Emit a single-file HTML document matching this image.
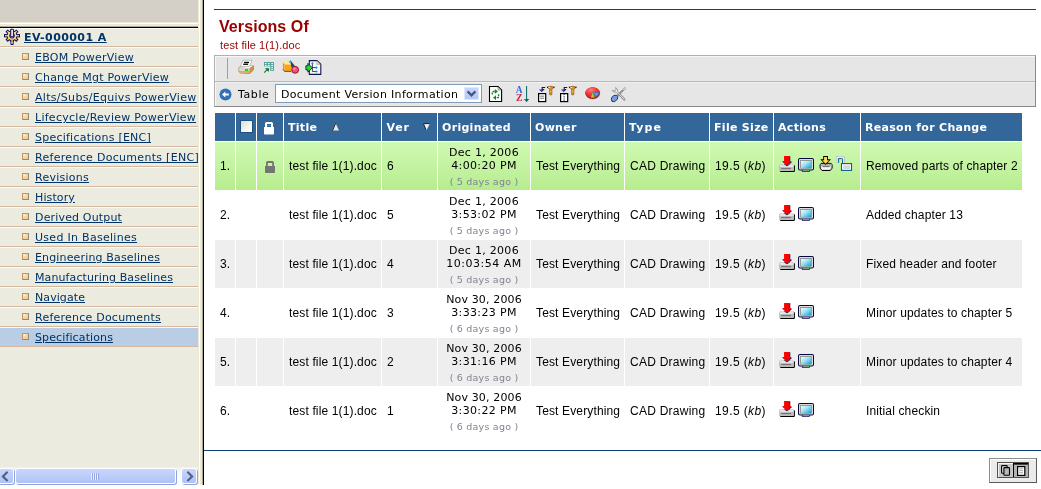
<!DOCTYPE html>
<html>
<head>
<meta charset="utf-8">
<title>Versions Of</title>
<style>
html,body{margin:0;padding:0;}
#grid,#side,#tb,#h1,#h2{will-change:transform;}
body{width:1041px;height:489px;overflow:hidden;background:#fff;position:relative;font-family:"Liberation Sans",sans-serif;font-size:12px;color:#000;}
.abs{position:absolute;}
/* ---------- sidebar ---------- */
#side{position:absolute;left:0;top:0;width:198px;height:485px;background:#ecebdf;overflow:hidden;}
#sidetop{position:absolute;left:0;top:0;width:198px;height:22px;background:#d4d0c8;}
#sidetop2{position:absolute;left:0;top:22px;width:198px;height:5px;background:#ece9d8;border-bottom:1px solid #aca899;box-sizing:border-box;}
#sidetop3{position:absolute;left:0;top:23px;width:198px;height:1px;background:#fff;}
#sideblack{position:absolute;left:0;top:27px;width:198px;height:1px;background:#000;}
#menu{position:absolute;left:0;top:28px;width:198px;}
.mi{position:relative;height:18px;border-bottom:1px solid #d4b8a0;border-top:1px solid #fbfaf6;white-space:nowrap;font-family:"DejaVu Sans","Liberation Sans",sans-serif;font-size:11px;line-height:18px;color:#003366;}
.mi.first{height:17px;line-height:17px;}
.mi.sel{background:#b9cde5;}
.mi a{position:absolute;left:35px;top:1px;color:#003366;text-decoration:underline;}
.mi.first a{left:24px;top:0;font-weight:bold;line-height:18px;}
.bul{position:absolute;left:22px;top:5px;width:5px;height:5px;border:1px solid #c29466;border-right-color:#8f8b74;border-bottom-color:#8f8b74;background:linear-gradient(135deg,#ffecc8,#f6d4a0 50%,#f0c890);}
.bul:after{content:"";position:absolute;left:1px;top:1px;width:1px;height:1px;background:#fff;}
/* frame border */
#fb1{position:absolute;left:198px;top:0;width:1px;height:485px;background:#ece9d8;}
#fb2{position:absolute;left:199px;top:0;width:1px;height:485px;background:#fff;}
#fb3{position:absolute;left:200px;top:0;width:3px;height:485px;background:#ece9d8;border-right:1px solid #aca899;box-sizing:border-box;}
#fb4{position:absolute;left:203px;top:0;width:1px;height:485px;background:#000;}
/* ---------- main ---------- */
#topline{position:absolute;left:214px;top:9px;width:822px;height:1px;background:#0f3f75;}
#h1{position:absolute;left:219px;top:18px;letter-spacing:0.08px;font-size:16px;line-height:18px;font-weight:bold;color:#990000;white-space:nowrap;}
#h2{position:absolute;left:220px;top:38px;letter-spacing:0.12px;font-size:11px;line-height:14px;color:#990000;white-space:nowrap;}
#tb{position:absolute;left:214px;top:55px;width:820px;height:50px;border:1px solid #b0b0b0;border-right-color:#8a8a8a;border-bottom-color:#8a8a8a;background:#e6e6e6;}
#tbsep{position:absolute;left:0;top:25px;width:820px;height:1px;background:#b8b8b8;}
#botline{position:absolute;left:204px;top:450px;width:837px;height:1px;background:#0f3f75;}

#tb{box-shadow:inset 1px 1px 0 #f8f8f8;}
#tbsep2{position:absolute;left:0;top:26px;width:820px;height:1px;background:#f0f0f0;}
#tbv{position:absolute;left:12px;top:2px;width:1px;height:21px;background:#8c9fc4;}
.ic{position:absolute;display:block;overflow:visible;}
#tbl-label{position:absolute;left:23px;top:32px;letter-spacing:0.6px;font-family:"DejaVu Sans","Liberation Sans",sans-serif;font-size:11px;line-height:14px;white-space:nowrap;color:#000;}
#sel{position:absolute;left:60px;top:28px;width:205px;height:17px;border:1px solid #7f9db9;background:#fff;}
#sel span{position:absolute;left:5px;top:3px;letter-spacing:0.33px;font-family:"DejaVu Sans","Liberation Sans",sans-serif;font-size:11px;line-height:14px;white-space:nowrap;color:#000;}
#selbtn{position:absolute;left:188px;top:2px;width:15px;height:13px;border-radius:2px;background:linear-gradient(#c9d7fd,#b4c6f6);box-shadow:0 0 0 1px #dfe7fe inset;}

#grid{position:absolute;left:214px;top:112px;border-collapse:separate;border-spacing:1px;table-layout:fixed;width:809px;}
#grid th{letter-spacing:0.3px;background:#336699;color:#fff;height:28px;padding:0 0 0 4px;text-align:left;font-family:"DejaVu Sans","Liberation Sans",sans-serif;font-weight:bold;font-size:11px;white-space:nowrap;position:relative;overflow:hidden;}
#grid td{letter-spacing:0.14px;height:48px;padding:0 0 0 5px;font-family:"Liberation Sans",sans-serif;font-size:12px;white-space:nowrap;position:relative;overflow:hidden;vertical-align:middle;}
#grid tr.g td{background:linear-gradient(#d0f9b1,#c4f3a2 50%,#b6ec8e);}
#grid tr.e td{background:#eeeeee;}
#grid tr.o td{background:#ffffff;}
#grid td.dt{letter-spacing:0.28px;padding:0;text-align:center;font-family:"DejaVu Sans","Liberation Sans",sans-serif;font-size:11px;line-height:13px;}
#grid td.dt i{display:block;font-style:normal;font-size:9.5px;letter-spacing:0.22px;color:#838294;line-height:12px;margin-top:4px;}
#grid th span.t{position:relative;top:0px;}
#grid td.dt .dd{position:relative;top:1px;}
#grid td.ty{letter-spacing:0.25px;}
#grid td.sz{letter-spacing:0.4px;}
#grid td.dt b{font-weight:normal;letter-spacing:0.34px;}


#sb{position:absolute;left:0;top:467px;width:198px;height:18px;background:linear-gradient(#f0efe8,#fbfbf8 40%,#fdfdfb);}
.sbb{position:absolute;top:1px;height:14px;border:1px solid #fff;border-radius:3px;background:linear-gradient(#c8d6fd,#bccdfa 50%,#aec2f6);box-shadow:1px 1px 0 #8ea4dc;}

#pg{position:absolute;left:989px;top:458px;width:46px;height:23px;border:1px solid #8c8c8c;border-right-color:#5a5a5a;border-bottom-color:#5a5a5a;background:#ebebeb;box-shadow:inset 1px 1px 0 #fff;}
#pgi{position:absolute;left:7px;top:3px;width:30px;height:14px;border:1px solid #505050;background:#c8c8c8;}
#pgl{position:absolute;left:0;top:0;width:15px;height:14px;background:#c6c6c6;box-shadow:inset 1px 1px 0 #f4f4f4;}
#pgr{position:absolute;left:15px;top:0;width:15px;height:14px;background:#b2b2b2;box-shadow:inset 1px 1px 0 #000, inset 0 2px 0 #444;}
.vd{font-family:"DejaVu Sans","Liberation Sans",sans-serif;}
</style>
</head>
<body>
<div id="side">
 <div id="sidetop"></div><div id="sidetop2"></div><div id="sidetop3"></div><div id="sideblack"></div>
 <div id="menu">
  <div class="mi first"><svg class="ic" style="left:3px;top:-1px" width="18" height="18" viewBox="0 0 18 18"><line x1="12.20" y1="7.70" x2="17.00" y2="7.70" stroke="#10104c" stroke-width="3.30" stroke-linecap="butt"/><line x1="5.80" y1="7.70" x2="1.00" y2="7.70" stroke="#10104c" stroke-width="3.30" stroke-linecap="butt"/><line x1="11.34" y1="9.88" x2="14.41" y2="12.75" stroke="#10104c" stroke-width="3.30" stroke-linecap="butt"/><line x1="6.66" y1="9.88" x2="3.59" y2="12.75" stroke="#10104c" stroke-width="3.30" stroke-linecap="butt"/><line x1="11.34" y1="5.52" x2="14.41" y2="2.65" stroke="#10104c" stroke-width="3.30" stroke-linecap="butt"/><line x1="6.66" y1="5.52" x2="3.59" y2="2.65" stroke="#10104c" stroke-width="3.30" stroke-linecap="butt"/><line x1="9.00" y1="10.90" x2="9.00" y2="13.70" stroke="#10104c" stroke-width="3.30" stroke-linecap="butt"/><circle cx="9" cy="7.7" r="3.6" fill="none" stroke="#10104c" stroke-width="3.6"/><line x1="12.20" y1="7.70" x2="16.00" y2="7.70" stroke="#ffc41c" stroke-width="1.40" stroke-linecap="butt"/><line x1="5.80" y1="7.70" x2="2.00" y2="7.70" stroke="#ffc41c" stroke-width="1.40" stroke-linecap="butt"/><line x1="11.34" y1="9.88" x2="13.68" y2="12.06" stroke="#ffc41c" stroke-width="1.40" stroke-linecap="butt"/><line x1="6.66" y1="9.88" x2="4.32" y2="12.06" stroke="#ffc41c" stroke-width="1.40" stroke-linecap="butt"/><line x1="11.34" y1="5.52" x2="13.68" y2="3.34" stroke="#ffd4a8" stroke-width="1.40" stroke-linecap="butt"/><line x1="6.66" y1="5.52" x2="4.32" y2="3.34" stroke="#ffd4a8" stroke-width="1.40" stroke-linecap="butt"/><line x1="9.00" y1="10.90" x2="9.00" y2="12.70" stroke="#ffc41c" stroke-width="1.40" stroke-linecap="butt"/><circle cx="9" cy="7.7" r="3.6" fill="none" stroke="#ffd4a8" stroke-width="1.7"/><circle cx="9" cy="7.7" r="1.9" fill="#ecebdf"/><rect x="7.2" y="0.8" width="3.7" height="8.6" rx="1" fill="#10104c"/><rect x="8.2" y="1.8" width="1.7" height="6.4" fill="#c4d4f8"/><rect x="8.8" y="1.8" width="0.8" height="6.4" fill="#fff"/><rect x="7.4" y="11.8" width="3.3" height="5.2" rx="0.9" fill="#10104c"/><rect x="8.3" y="13.2" width="1.5" height="2.6" fill="#e4ecfc"/><rect x="8.3" y="11.2" width="1.5" height="1.9" fill="#ffc41c"/></svg><a style="letter-spacing:0.420px">EV-000001 A</a></div>
  <div class="mi"><span class="bul"></span><a style="letter-spacing:0.260px">EBOM PowerView</a></div>
  <div class="mi"><span class="bul"></span><a style="letter-spacing:0.240px">Change Mgt PowerView</a></div>
  <div class="mi"><span class="bul"></span><a style="letter-spacing:0.300px">Alts/Subs/Equivs PowerView</a></div>
  <div class="mi"><span class="bul"></span><a style="letter-spacing:0.270px">Lifecycle/Review PowerView</a></div>
  <div class="mi"><span class="bul"></span><a style="letter-spacing:0.235px">Specifications [ENC]</a></div>
  <div class="mi"><span class="bul"></span><a style="letter-spacing:0.300px">Reference Documents [ENC]</a></div>
  <div class="mi"><span class="bul"></span><a style="letter-spacing:0.260px">Revisions</a></div>
  <div class="mi"><span class="bul"></span><a style="letter-spacing:0.120px">History</a></div>
  <div class="mi"><span class="bul"></span><a style="letter-spacing:0.160px">Derived Output</a></div>
  <div class="mi"><span class="bul"></span><a style="letter-spacing:0.290px">Used In Baselines</a></div>
  <div class="mi"><span class="bul"></span><a style="letter-spacing:0.150px">Engineering Baselines</a></div>
  <div class="mi"><span class="bul"></span><a style="letter-spacing:0.107px">Manufacturing Baselines</a></div>
  <div class="mi"><span class="bul"></span><a style="letter-spacing:0.080px">Navigate</a></div>
  <div class="mi"><span class="bul"></span><a style="letter-spacing:0.230px">Reference Documents</a></div>
  <div class="mi sel"><span class="bul"></span><a style="letter-spacing:0.120px">Specifications</a></div>
 </div>
<div id="sb">
<div class="sbb" style="left:-2px;width:14px;"><svg class="ic" style="left:1.5px;top:2px" width="8" height="11" viewBox="0 0 8 11"><path d="M6.6 0.8L1.9 5.4L6.6 10" fill="none" stroke="#4d6185" stroke-width="2.1"/></svg></div>
<div class="sbb" style="left:15px;width:159px;"><div style="position:absolute;left:75px;top:4px;width:8px;height:7px;background:repeating-linear-gradient(90deg,#eef3fe 0,#eef3fe 1px,#8ea4e0 1px,#8ea4e0 2px);opacity:0.9"></div></div>
<div class="sbb" style="left:181px;width:14px;"><svg class="ic" style="left:4px;top:2px" width="8" height="11" viewBox="0 0 8 11"><path d="M1.4 0.8L6.1 5.4L1.4 10" fill="none" stroke="#4d6185" stroke-width="2.1"/></svg></div>
</div>
</div>
<div id="fb1"></div><div id="fb2"></div><div id="fb3"></div><div id="fb4"></div>

<div id="topline"></div>
<div id="h1">Versions Of</div>
<div id="h2">test file 1(1).doc</div>
<div id="tb"><div id="tbsep"></div><div id="tbsep2"></div><div id="tbv"></div>
<!-- printer -->
<svg class="ic" style="left:23px;top:4px" width="17" height="15" viewBox="0 0 17 15">
 <polygon points="0.5,7.6 2.3,6.0 14.5,5.3 16,5.5 16,9.8 11.7,13.9 2.3,13.6 0.5,11.5" fill="#c68a4a"/>
 <polygon points="1,7.6 2.6,6.3 15.2,5.6 11.7,7.9" fill="#ffffd8"/>
 <rect x="1.2" y="8.1" width="10.4" height="3.1" fill="#dcdcdc"/>
 <polygon points="1.2,11.3 11.7,11.3 11.7,13.2 2.6,13" fill="#e0b070"/>
 <polygon points="11.9,8 15.6,5.9 15.6,9.6 11.9,13.2" fill="#c8904c"/>
 <polygon points="5,0.2 14,0.2 11.5,6.4 2.4,6.4" fill="#fff" stroke="#9a9a9a" stroke-width="0.6"/>
 <rect x="6.1" y="1.8" width="4.9" height="1.3" fill="#000"/>
 <rect x="5.2" y="3.6" width="4.9" height="1.3" fill="#000"/>
 <rect x="6.9" y="9" width="3.3" height="2" fill="#10e010"/>
</svg>
<!-- export -->
<svg class="ic" style="left:48px;top:6px" width="13" height="13" viewBox="0 0 13 13">
 <rect x="1" y="0" width="10" height="4.4" fill="#57a5a3"/>
 <rect x="7.2" y="0" width="3.8" height="9" fill="#57a5a3"/>
 <g fill="#f0f6f4"><rect x="2" y="1" width="1.6" height="1.1"/><rect x="5" y="1" width="1.6" height="1.1"/><rect x="8.3" y="1" width="1.7" height="1.1"/>
 <rect x="2" y="3" width="1.6" height="1.1"/><rect x="5" y="3" width="1.6" height="1.1"/><rect x="8.3" y="3" width="1.7" height="1.1"/>
 <rect x="8.3" y="5" width="1.7" height="1.1"/><rect x="8.3" y="7" width="1.7" height="1.1"/></g>
 <polygon points="1.9,6.2 6.2,6.2 5.6,10" fill="#0a7a2c"/>
 <line x1="1.2" y1="10.6" x2="4.6" y2="7.2" stroke="#0a7a2c" stroke-width="1.1"/>
</svg>
<!-- shapes -->
<svg class="ic" style="left:67px;top:4px" width="18" height="16" viewBox="0 0 18 16">
 <polygon points="8.3,0 6.5,2.3 9,4.8 9,7.8" fill="#3cb4f4"/>
 <polygon points="8.3,0 12.9,6 9.3,7.8 9,4.6" fill="#104a7c"/>
 <polygon points="0.9,2.2 7,2.2 9,4.6 2.5,4.6" fill="#fff060"/>
 <polygon points="0.9,2.2 2.5,4.6 2.5,11 0.9,9.1" fill="#ff9208"/>
 <rect x="2.5" y="4.6" width="6.5" height="6.4" fill="#ffa210"/>
 <polyline points="0.9,9.3 2.5,11.4 9,11.4" fill="none" stroke="#105080" stroke-width="0.9"/>
 <circle cx="13.1" cy="9.8" r="3.5" fill="#e85472" stroke="#8c1020" stroke-width="0.9"/>
 <circle cx="12.4" cy="8.8" r="1.2" fill="#f898b0"/>
</svg>
<!-- doc arrow -->
<svg class="ic" style="left:90px;top:4px" width="17" height="16" viewBox="0 0 17 16">
 <polygon points="4.3,0.6 12,0.6 15.8,4.3 15.8,14.4 4.3,14.4" fill="#f8f8f0" stroke="#14144c" stroke-width="1.1"/>
 <polygon points="11.8,0.8 11.8,4.4 15.6,4.4" fill="#d8d8d0" stroke="#808080" stroke-width="0.4"/>
 <path d="M7.4 3.3V11.5H11M7.4 7.6H11" fill="none" stroke="#14144c" stroke-width="0.8"/>
 <g fill="#2080f0"><polygon points="7.4,2 8.7,3.3 7.4,4.6 6.1,3.3"/><polygon points="11.4,6.3 12.7,7.6 11.4,8.9 10.1,7.6"/><polygon points="11.4,10.2 12.7,11.5 11.4,12.8 10.1,11.5"/></g>
 <polygon points="0.9,5.8 2.9,5.8 2.9,3.4 7.3,7.8 2.9,12.2 2.9,9.9 0.9,9.9" fill="#22e022" stroke="#14144c" stroke-width="0.9" stroke-linejoin="miter"/>
</svg>
<!-- back -->
<svg class="ic" style="left:4px;top:32px" width="13" height="13" viewBox="0 0 13 13">
 <circle cx="6.5" cy="6.5" r="6" fill="#2f72b8"/>
 <path d="M3 6.5L6.3 3.4V5.4H9.8V7.6H6.3V9.6Z" fill="#fff"/>
</svg>
<div id="tbl-label">Table</div>
<div id="sel"><span>Document Version Information</span><div id="selbtn"><svg class="ic" style="left:3px;top:3px" width="9" height="7" viewBox="0 0 9 7"><path d="M0.6 1.4L4.5 5.3L8.4 1.4" fill="none" stroke="#44587e" stroke-width="2.3"/></svg></div></div>
<svg class="ic" style="left:274px;top:30px" width="14" height="17" viewBox="0 0 14 17">
<polygon points="0.5,0.5 9,0.5 12.6,4 12.6,15.5 0.5,15.5" fill="#fff" stroke="#000" stroke-width="1.1"/>
<polygon points="9,0.9 9,4 12.2,4" fill="#e4e4e4" stroke="#555" stroke-width="0.5"/>
<path d="M3.3 8.4V6.6Q3.3 5.5 4.4 5.5H6.4" fill="none" stroke="#0a8a14" stroke-width="1.3" stroke-dasharray="2 0.7"/>
<polygon points="5.9,3.1 8.9,5.5 5.9,7.8" fill="#0a8a14"/>
<path d="M9.6 8.2V10.6Q9.6 11.7 8.5 11.7H6.6" fill="none" stroke="#0a8a14" stroke-width="1.3" stroke-dasharray="2 0.7"/>
<polygon points="7,9.3 4,11.7 7,14" fill="#0a8a14"/>
</svg><svg class="ic" style="left:301px;top:30px" width="15" height="17" viewBox="0 0 15 17">
<text x="-0.3" y="6.7" font-family="Liberation Serif,serif" font-weight="bold" font-size="10" fill="#3768de" transform="scale(0.95,1)">A</text>
<text x="0.1" y="15" font-family="Liberation Serif,serif" font-weight="bold" font-size="10" fill="#cf2236" transform="scale(0.98,1)">Z</text>
<rect x="10.1" y="0" width="1" height="15" fill="#006464"/>
<polygon points="7.8,13 13.3,13 10.6,16" fill="#006464"/>
<polygon points="7.8,13 10.1,13 10.1,15.2" fill="#18a028"/>
</svg><svg class="ic" style="left:323px;top:30px" width="17" height="17" viewBox="0 0 17 17">
<rect x="0.6" y="7.6" width="7.1" height="8" fill="#fff" stroke="#000" stroke-width="1.2"/><rect x="2.2" y="9.7" width="3.9" height="0.9" fill="#606060"/><rect x="2.2" y="11.8" width="3.9" height="0.9" fill="#606060"/>
<path d="M7.2 1.5H4.2V5.2M4.2 3.6H6.2" fill="none" stroke="#14104c" stroke-width="1.1"/>
<polygon points="0.9,3.5 4.8,3.5 3.9,6.3" fill="#5a1fa0"/>
<path d="M9.3 0.9Q12.7 -0.3 16.2 0.9L13.9 3.6V8.6Q12.8 9.2 11.6 8.6V3.6Z" fill="#dc9026" stroke="#6e4208" stroke-width="0.55"/>
<path d="M9.2 0.8L9.9 2.1M16.3 0.8L15.6 2.1" stroke="#000" stroke-width="0.9"/>
<rect x="10.5" y="1" width="1.6" height="1" fill="#ffe8b0"/><rect x="12.4" y="4.8" width="0.8" height="1.6" fill="#ffe8b0"/>
</svg><svg class="ic" style="left:345px;top:30px" width="17" height="17" viewBox="0 0 17 17">
<rect x="0.6" y="7.6" width="7.1" height="8" fill="#fff" stroke="#000" stroke-width="1.2"/><rect x="3.7" y="7.6" width="0.9" height="8" fill="#14145a"/><rect x="3.5" y="9" width="1.4" height="1.2" fill="#fff"/><rect x="3.5" y="11.3" width="1.4" height="1.2" fill="#fff"/><rect x="3.5" y="13.4" width="1.4" height="0.8" fill="#fff"/>
<path d="M7.2 1.5H4.2V5.2M4.2 3.6H6.2" fill="none" stroke="#14104c" stroke-width="1.1"/>
<polygon points="0.9,3.5 4.8,3.5 3.9,6.3" fill="#5a1fa0"/>
<path d="M9.3 0.9Q12.7 -0.3 16.2 0.9L13.9 3.6V8.6Q12.8 9.2 11.6 8.6V3.6Z" fill="#dc9026" stroke="#6e4208" stroke-width="0.55"/>
<path d="M9.2 0.8L9.9 2.1M16.3 0.8L15.6 2.1" stroke="#000" stroke-width="0.9"/>
<rect x="10.5" y="1" width="1.6" height="1" fill="#ffe8b0"/><rect x="12.4" y="4.8" width="0.8" height="1.6" fill="#ffe8b0"/>
</svg><svg class="ic" style="left:370px;top:30.2px" width="16" height="14" viewBox="0 0 16 14">
<defs><radialGradient id="pie" cx="0.38" cy="0.25" r="0.85"><stop offset="0" stop-color="#ff7a7a"/><stop offset="0.55" stop-color="#f23030"/><stop offset="1" stop-color="#d02020"/></radialGradient></defs>
<ellipse cx="8" cy="7.6" rx="7.3" ry="5.8" fill="#8c8c8c" opacity="0.45"/>
<ellipse cx="7.6" cy="7.1" rx="7.4" ry="5.8" fill="#a01818"/>
<ellipse cx="7.6" cy="6.5" rx="7" ry="5.2" fill="url(#pie)"/>
<path d="M7.4 6.2H14.4Q14.6 8.6 10.8 10.9Z" fill="#3a78c8"/>
<path d="M8.4 7H13.6Q13.2 8.8 10.9 10.1Z" fill="#78b0ec" opacity="0.55"/>
<polygon points="7.6,6.6 9.6,11.5 5.9,11.5" fill="#86e02c"/>
</svg><svg class="ic" style="left:396px;top:31px" width="16" height="16" viewBox="0 0 16 16">
<path d="M13.9 1.3L5 10.2" stroke="#8c8c8c" stroke-width="1.9" stroke-linecap="round"/>
<path d="M13.9 1.3L12.6 2.6" stroke="#fff" stroke-width="0.9" stroke-linecap="round"/>
<path d="M1.2 3.4Q2.3 5.8 5.4 5.2L12.6 12.3Q13.6 13.2 13.1 11.6L6.6 4.2Q7 1.6 4.6 0.6Q5.6 2.4 4.6 3.4Q3.2 4.4 1.2 3.4Z" fill="#f4f4f4" stroke="#8a8a8a" stroke-width="0.8"/>
<path d="M8.3 7.3L13.3 12.6" stroke="#8a8a8a" stroke-width="2.2" stroke-linecap="round"/>
<path d="M8.6 7.4L13.1 12.2" stroke="#ececec" stroke-width="0.9" stroke-linecap="round"/>
<polygon points="2.6,8.6 5.4,8.2 6.8,9.6 6.4,12.2 3.6,14.6 1,14.4 0.4,12.6 0.6,10.8" fill="#7e9ccc" stroke="#1c28b0" stroke-width="1"/>
</svg>
</div>
<table id="grid" cellspacing="1" cellpadding="0">
<colgroup><col style="width:20px"><col style="width:20px"><col style="width:26px"><col style="width:97px"><col style="width:55px"><col style="width:92px"><col style="width:93px"><col style="width:84px"><col style="width:63px"><col style="width:86px"><col style="width:161px"></colgroup>
<tr><th></th><th><div style="position:absolute;left:4px;top:7px;width:11px;height:11px;border:1px solid #1c5180;background:linear-gradient(135deg,#dcdcd4,#f4f4f0 55%,#ffffff);"></div></th><th><svg class="ic" style="left:7px;top:9px" width="10" height="13" viewBox="0 0 10 13"><path d="M2.6 0H7.4Q9 0 9 1.6V5H10V11.4Q10 12.4 9 12.4H1Q0 12.4 0 11.4V5H1V1.6Q1 0 2.6 0ZM3 2.1V5H7V2.1Z" fill="#fff" fill-rule="evenodd"/><rect x="3" y="3.1" width="4" height="0.9" fill="#5b86b5"/></svg></th><th><span class="t">Title</span><svg class="ic" style="left:48px;top:10px" width="7" height="8" viewBox="0 0 7 8"><polygon points="3.5,0 7,7.6 0,7.6" fill="#ebe8e4"/><polyline points="3.6,0.3 0.4,7.8" fill="none" stroke="#1a1a1a" stroke-width="1"/></svg></th><th><span class="t" style="letter-spacing:0.8px;left:0.5px">Ver</span><svg class="ic" style="left:41px;top:10px" width="7" height="8" viewBox="0 0 7 8"><polygon points="0,0.3 7,0.3 3.4,7.4" fill="#f2f0ee"/><polyline points="6.8,0.6 0.4,0.6 3,6.8" fill="none" stroke="#1a1a1a" stroke-width="1"/></svg></th><th><span class="t">Originated</span></th><th><span class="t">Owner</span></th><th><span class="t" style="letter-spacing:1.1px">Type</span></th><th><span class="t">File Size</span></th><th><span class="t">Actions</span></th><th><span class="t">Reason for Change</span></th></tr>
<tr class="g"><td>1.</td><td></td><td><svg class="ic" style="left:8px;top:19px" width="10" height="12" viewBox="0 0 10 12"><path d="M2.6 0H7.4Q9 0 9 1.6V5H10V11.2Q10 12 9.2 12H.8Q0 12 0 11.2V5H1V1.6Q1 0 2.6 0ZM2.8 1.9V5H7.2V1.9Z" fill="#757575" fill-rule="evenodd"/></svg></td><td>test file 1(1).doc</td><td>6</td><td class="dt"><div class="dd">Dec 1, 2006<br><b>4:00:20 PM</b><i>( 5 days ago )</i></div></td><td>Test Everything</td><td class="ty">CAD Drawing</td><td class="sz">19.5 (<em>kb</em>)</td><td><svg class="ic" style="left:5px;top:14px" width="16" height="16" viewBox="0 0 16 16">
<polygon points="5.7,0.3 11.3,0.3 11.3,5.7 13.3,5.7 8.6,10 3.7,5.7 5.7,5.7" fill="#10205c"/>
<polygon points="5.1,0 10.7,0 10.7,5.3 12.3,5.3 8,9.6 3.1,5.3 5.1,5.3" fill="#ff0000"/>
<rect x="0.9" y="9" width="15" height="7" rx="1.2" fill="#000"/>
<rect x="0.2" y="8.3" width="14.8" height="6.8" rx="1.2" fill="#bcbcbc"/>
<rect x="0.6" y="8.6" width="14" height="2.3" rx="1" fill="#e4e4e4"/>
<polygon points="4.6,8.3 11.2,8.3 8,10.2" fill="#10205c"/>
<polygon points="3.1,5.3 12.3,5.3 8,9.6" fill="#ff0000"/>
<rect x="2.2" y="12.1" width="9.8" height="1" fill="#6e6e6e"/>
</svg><svg class="ic" style="left:24px;top:16px" width="16" height="14" viewBox="0 0 16 14">
<rect x="3.8" y="12" width="8" height="1.8" rx="0.5" fill="#10104c"/>
<rect x="0" y="0" width="16" height="12.5" rx="2" fill="#080840"/>
<rect x="1" y="1" width="14" height="10.5" rx="1" fill="#dcdcdc"/>
<rect x="2.2" y="2" width="11.6" height="8.6" fill="#8c8c8c"/>
<defs><linearGradient id="scr" x1="0" y1="0" x2="1" y2="1"><stop offset="0" stop-color="#f4ffff"/><stop offset="0.45" stop-color="#9be3f3"/><stop offset="1" stop-color="#149dd2"/></linearGradient></defs>
<rect x="3" y="2.9" width="10.1" height="7.3" fill="url(#scr)"/>
<rect x="4.6" y="12.2" width="6.4" height="0.8" fill="#b0b0b0"/>
<rect x="9.9" y="12.1" width="1.2" height="0.9" fill="#30e030"/>
</svg><svg class="ic" style="left:44px;top:14px" width="15" height="16" viewBox="0 0 15 16">
<polygon points="3,7.4 13.2,7.4 14.1,8.8 14.1,12.2 12.2,14.5 4,14.5 2.1,12.2 2.1,8.8" fill="#e2e2e2" stroke="#000" stroke-width="1"/>
<rect x="2.8" y="7.9" width="10.6" height="2.2" fill="#b0b0b0"/>
<rect x="4.6" y="10.3" width="7" height="0.8" fill="#4a4a4a"/>
<rect x="4" y="11.4" width="8.2" height="1.6" fill="#f6f6f6"/>
<polygon points="5.2,0.1 10,0.1 10,3.3 13,3.3 7.6,9 2.2,3.3 5.2,3.3" fill="#000"/>
<polygon points="6.1,0.9 9.1,0.9 9.1,4.2 11.1,4.2 7.6,7.8 4.1,4.2 6.1,4.2" fill="#ffdc3c"/>
</svg><svg class="ic" style="left:62px;top:14px" width="17" height="16" viewBox="0 0 17 16">
<path d="M1.2 6.6V1.1H6Q7.8 1.1 7.8 2.9V7.2" fill="none" stroke="#a4a4ac" stroke-width="2.4"/>
<path d="M1.1 6.3V1.2H6Q7.7 1.2 7.7 2.9V7.2" fill="none" stroke="#f2f2f6" stroke-width="1.4"/>
<path d="M2.6 6.8V2.6H5.8Q6.6 2.6 6.6 3.4V7.2" fill="none" stroke="#006494" stroke-width="1"/>
<rect x="5.5" y="7.6" width="10" height="6.8" fill="#fff" stroke="#006090" stroke-width="1.1"/>
<rect x="7.2" y="9.2" width="6.8" height="3.8" fill="#d8d8d8"/>
</svg></td><td>Removed parts of chapter 2</td></tr>
<tr class="o"><td>2.</td><td></td><td></td><td>test file 1(1).doc</td><td>5</td><td class="dt"><div class="dd">Dec 1, 2006<br><b>3:53:02 PM</b><i>( 5 days ago )</i></div></td><td>Test Everything</td><td class="ty">CAD Drawing</td><td class="sz">19.5 (<em>kb</em>)</td><td><svg class="ic" style="left:5px;top:14px" width="16" height="16" viewBox="0 0 16 16">
<polygon points="5.7,0.3 11.3,0.3 11.3,5.7 13.3,5.7 8.6,10 3.7,5.7 5.7,5.7" fill="#10205c"/>
<polygon points="5.1,0 10.7,0 10.7,5.3 12.3,5.3 8,9.6 3.1,5.3 5.1,5.3" fill="#ff0000"/>
<rect x="0.9" y="9" width="15" height="7" rx="1.2" fill="#000"/>
<rect x="0.2" y="8.3" width="14.8" height="6.8" rx="1.2" fill="#bcbcbc"/>
<rect x="0.6" y="8.6" width="14" height="2.3" rx="1" fill="#e4e4e4"/>
<polygon points="4.6,8.3 11.2,8.3 8,10.2" fill="#10205c"/>
<polygon points="3.1,5.3 12.3,5.3 8,9.6" fill="#ff0000"/>
<rect x="2.2" y="12.1" width="9.8" height="1" fill="#6e6e6e"/>
</svg><svg class="ic" style="left:24px;top:16px" width="16" height="14" viewBox="0 0 16 14">
<rect x="3.8" y="12" width="8" height="1.8" rx="0.5" fill="#10104c"/>
<rect x="0" y="0" width="16" height="12.5" rx="2" fill="#080840"/>
<rect x="1" y="1" width="14" height="10.5" rx="1" fill="#dcdcdc"/>
<rect x="2.2" y="2" width="11.6" height="8.6" fill="#8c8c8c"/>
<defs><linearGradient id="scr" x1="0" y1="0" x2="1" y2="1"><stop offset="0" stop-color="#f4ffff"/><stop offset="0.45" stop-color="#9be3f3"/><stop offset="1" stop-color="#149dd2"/></linearGradient></defs>
<rect x="3" y="2.9" width="10.1" height="7.3" fill="url(#scr)"/>
<rect x="4.6" y="12.2" width="6.4" height="0.8" fill="#b0b0b0"/>
<rect x="9.9" y="12.1" width="1.2" height="0.9" fill="#30e030"/>
</svg></td><td>Added chapter 13</td></tr>
<tr class="e"><td>3.</td><td></td><td></td><td>test file 1(1).doc</td><td>4</td><td class="dt"><div class="dd">Dec 1, 2006<br><b style="letter-spacing:0.52px">10:03:54 AM</b><i>( 5 days ago )</i></div></td><td>Test Everything</td><td class="ty">CAD Drawing</td><td class="sz">19.5 (<em>kb</em>)</td><td><svg class="ic" style="left:5px;top:14px" width="16" height="16" viewBox="0 0 16 16">
<polygon points="5.7,0.3 11.3,0.3 11.3,5.7 13.3,5.7 8.6,10 3.7,5.7 5.7,5.7" fill="#10205c"/>
<polygon points="5.1,0 10.7,0 10.7,5.3 12.3,5.3 8,9.6 3.1,5.3 5.1,5.3" fill="#ff0000"/>
<rect x="0.9" y="9" width="15" height="7" rx="1.2" fill="#000"/>
<rect x="0.2" y="8.3" width="14.8" height="6.8" rx="1.2" fill="#bcbcbc"/>
<rect x="0.6" y="8.6" width="14" height="2.3" rx="1" fill="#e4e4e4"/>
<polygon points="4.6,8.3 11.2,8.3 8,10.2" fill="#10205c"/>
<polygon points="3.1,5.3 12.3,5.3 8,9.6" fill="#ff0000"/>
<rect x="2.2" y="12.1" width="9.8" height="1" fill="#6e6e6e"/>
</svg><svg class="ic" style="left:24px;top:16px" width="16" height="14" viewBox="0 0 16 14">
<rect x="3.8" y="12" width="8" height="1.8" rx="0.5" fill="#10104c"/>
<rect x="0" y="0" width="16" height="12.5" rx="2" fill="#080840"/>
<rect x="1" y="1" width="14" height="10.5" rx="1" fill="#dcdcdc"/>
<rect x="2.2" y="2" width="11.6" height="8.6" fill="#8c8c8c"/>
<defs><linearGradient id="scr" x1="0" y1="0" x2="1" y2="1"><stop offset="0" stop-color="#f4ffff"/><stop offset="0.45" stop-color="#9be3f3"/><stop offset="1" stop-color="#149dd2"/></linearGradient></defs>
<rect x="3" y="2.9" width="10.1" height="7.3" fill="url(#scr)"/>
<rect x="4.6" y="12.2" width="6.4" height="0.8" fill="#b0b0b0"/>
<rect x="9.9" y="12.1" width="1.2" height="0.9" fill="#30e030"/>
</svg></td><td>Fixed header and footer</td></tr>
<tr class="o"><td>4.</td><td></td><td></td><td>test file 1(1).doc</td><td>3</td><td class="dt"><div class="dd"><span style="letter-spacing:0.15px">Nov 30, 2006</span><br><b>3:33:23 PM</b><i>( 6 days ago )</i></div></td><td>Test Everything</td><td class="ty">CAD Drawing</td><td class="sz">19.5 (<em>kb</em>)</td><td><svg class="ic" style="left:5px;top:14px" width="16" height="16" viewBox="0 0 16 16">
<polygon points="5.7,0.3 11.3,0.3 11.3,5.7 13.3,5.7 8.6,10 3.7,5.7 5.7,5.7" fill="#10205c"/>
<polygon points="5.1,0 10.7,0 10.7,5.3 12.3,5.3 8,9.6 3.1,5.3 5.1,5.3" fill="#ff0000"/>
<rect x="0.9" y="9" width="15" height="7" rx="1.2" fill="#000"/>
<rect x="0.2" y="8.3" width="14.8" height="6.8" rx="1.2" fill="#bcbcbc"/>
<rect x="0.6" y="8.6" width="14" height="2.3" rx="1" fill="#e4e4e4"/>
<polygon points="4.6,8.3 11.2,8.3 8,10.2" fill="#10205c"/>
<polygon points="3.1,5.3 12.3,5.3 8,9.6" fill="#ff0000"/>
<rect x="2.2" y="12.1" width="9.8" height="1" fill="#6e6e6e"/>
</svg><svg class="ic" style="left:24px;top:16px" width="16" height="14" viewBox="0 0 16 14">
<rect x="3.8" y="12" width="8" height="1.8" rx="0.5" fill="#10104c"/>
<rect x="0" y="0" width="16" height="12.5" rx="2" fill="#080840"/>
<rect x="1" y="1" width="14" height="10.5" rx="1" fill="#dcdcdc"/>
<rect x="2.2" y="2" width="11.6" height="8.6" fill="#8c8c8c"/>
<defs><linearGradient id="scr" x1="0" y1="0" x2="1" y2="1"><stop offset="0" stop-color="#f4ffff"/><stop offset="0.45" stop-color="#9be3f3"/><stop offset="1" stop-color="#149dd2"/></linearGradient></defs>
<rect x="3" y="2.9" width="10.1" height="7.3" fill="url(#scr)"/>
<rect x="4.6" y="12.2" width="6.4" height="0.8" fill="#b0b0b0"/>
<rect x="9.9" y="12.1" width="1.2" height="0.9" fill="#30e030"/>
</svg></td><td>Minor updates to chapter 5</td></tr>
<tr class="e"><td>5.</td><td></td><td></td><td>test file 1(1).doc</td><td>2</td><td class="dt"><div class="dd"><span style="letter-spacing:0.15px">Nov 30, 2006</span><br><b>3:31:16 PM</b><i>( 6 days ago )</i></div></td><td>Test Everything</td><td class="ty">CAD Drawing</td><td class="sz">19.5 (<em>kb</em>)</td><td><svg class="ic" style="left:5px;top:14px" width="16" height="16" viewBox="0 0 16 16">
<polygon points="5.7,0.3 11.3,0.3 11.3,5.7 13.3,5.7 8.6,10 3.7,5.7 5.7,5.7" fill="#10205c"/>
<polygon points="5.1,0 10.7,0 10.7,5.3 12.3,5.3 8,9.6 3.1,5.3 5.1,5.3" fill="#ff0000"/>
<rect x="0.9" y="9" width="15" height="7" rx="1.2" fill="#000"/>
<rect x="0.2" y="8.3" width="14.8" height="6.8" rx="1.2" fill="#bcbcbc"/>
<rect x="0.6" y="8.6" width="14" height="2.3" rx="1" fill="#e4e4e4"/>
<polygon points="4.6,8.3 11.2,8.3 8,10.2" fill="#10205c"/>
<polygon points="3.1,5.3 12.3,5.3 8,9.6" fill="#ff0000"/>
<rect x="2.2" y="12.1" width="9.8" height="1" fill="#6e6e6e"/>
</svg><svg class="ic" style="left:24px;top:16px" width="16" height="14" viewBox="0 0 16 14">
<rect x="3.8" y="12" width="8" height="1.8" rx="0.5" fill="#10104c"/>
<rect x="0" y="0" width="16" height="12.5" rx="2" fill="#080840"/>
<rect x="1" y="1" width="14" height="10.5" rx="1" fill="#dcdcdc"/>
<rect x="2.2" y="2" width="11.6" height="8.6" fill="#8c8c8c"/>
<defs><linearGradient id="scr" x1="0" y1="0" x2="1" y2="1"><stop offset="0" stop-color="#f4ffff"/><stop offset="0.45" stop-color="#9be3f3"/><stop offset="1" stop-color="#149dd2"/></linearGradient></defs>
<rect x="3" y="2.9" width="10.1" height="7.3" fill="url(#scr)"/>
<rect x="4.6" y="12.2" width="6.4" height="0.8" fill="#b0b0b0"/>
<rect x="9.9" y="12.1" width="1.2" height="0.9" fill="#30e030"/>
</svg></td><td>Minor updates to chapter 4</td></tr>
<tr class="o"><td>6.</td><td></td><td></td><td>test file 1(1).doc</td><td>1</td><td class="dt"><div class="dd"><span style="letter-spacing:0.15px">Nov 30, 2006</span><br><b>3:30:22 PM</b><i>( 6 days ago )</i></div></td><td>Test Everything</td><td class="ty">CAD Drawing</td><td class="sz">19.5 (<em>kb</em>)</td><td><svg class="ic" style="left:5px;top:14px" width="16" height="16" viewBox="0 0 16 16">
<polygon points="5.7,0.3 11.3,0.3 11.3,5.7 13.3,5.7 8.6,10 3.7,5.7 5.7,5.7" fill="#10205c"/>
<polygon points="5.1,0 10.7,0 10.7,5.3 12.3,5.3 8,9.6 3.1,5.3 5.1,5.3" fill="#ff0000"/>
<rect x="0.9" y="9" width="15" height="7" rx="1.2" fill="#000"/>
<rect x="0.2" y="8.3" width="14.8" height="6.8" rx="1.2" fill="#bcbcbc"/>
<rect x="0.6" y="8.6" width="14" height="2.3" rx="1" fill="#e4e4e4"/>
<polygon points="4.6,8.3 11.2,8.3 8,10.2" fill="#10205c"/>
<polygon points="3.1,5.3 12.3,5.3 8,9.6" fill="#ff0000"/>
<rect x="2.2" y="12.1" width="9.8" height="1" fill="#6e6e6e"/>
</svg><svg class="ic" style="left:24px;top:16px" width="16" height="14" viewBox="0 0 16 14">
<rect x="3.8" y="12" width="8" height="1.8" rx="0.5" fill="#10104c"/>
<rect x="0" y="0" width="16" height="12.5" rx="2" fill="#080840"/>
<rect x="1" y="1" width="14" height="10.5" rx="1" fill="#dcdcdc"/>
<rect x="2.2" y="2" width="11.6" height="8.6" fill="#8c8c8c"/>
<defs><linearGradient id="scr" x1="0" y1="0" x2="1" y2="1"><stop offset="0" stop-color="#f4ffff"/><stop offset="0.45" stop-color="#9be3f3"/><stop offset="1" stop-color="#149dd2"/></linearGradient></defs>
<rect x="3" y="2.9" width="10.1" height="7.3" fill="url(#scr)"/>
<rect x="4.6" y="12.2" width="6.4" height="0.8" fill="#b0b0b0"/>
<rect x="9.9" y="12.1" width="1.2" height="0.9" fill="#30e030"/>
</svg></td><td>Initial checkin</td></tr>
</table>
<div id="botline"></div>
<div id="pg"><div id="pgi"><div id="pgl"><svg class="ic" style="left:3px;top:2px" width="10" height="11" viewBox="0 0 10 11"><rect x="0.6" y="0.6" width="5.6" height="7.6" rx="0.8" fill="#e4e4e4" stroke="#000" stroke-width="1.1"/><rect x="2.9" y="2.6" width="5.6" height="7.6" rx="0.8" fill="#b8b8b8" stroke="#000" stroke-width="1.1"/></svg></div>
<div id="pgr"><svg class="ic" style="left:4px;top:3px" width="9" height="11" viewBox="0 0 9 11"><rect x="0.6" y="0.6" width="7.2" height="8.8" fill="#fff" stroke="#000" stroke-width="1.2"/><rect x="2.2" y="2.4" width="3.8" height="0.9" fill="#9a9a9a"/><rect x="2.2" y="4.3" width="3.8" height="0.9" fill="#9a9a9a"/><rect x="2.2" y="6.3" width="3.8" height="0.9" fill="#9a9a9a"/></svg></div></div></div>
</body>
</html>
